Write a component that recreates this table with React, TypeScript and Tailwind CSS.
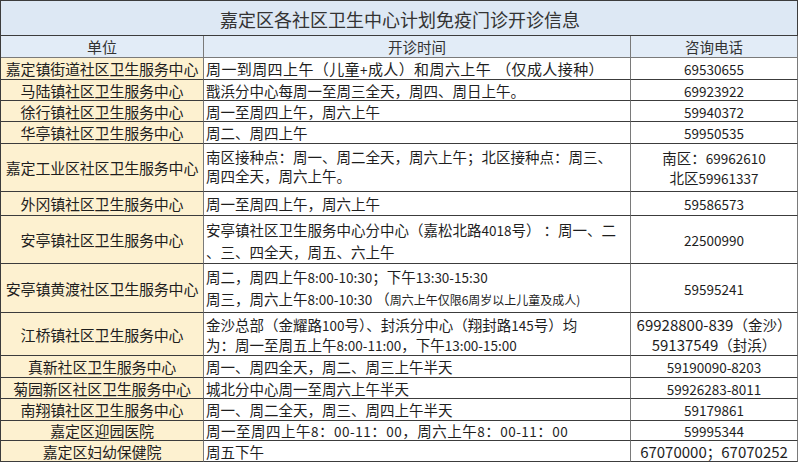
import React from "react";

const FONT = { fontFamily: '"Noto Sans CJK SC", "Noto Sans", sans-serif' };

function T({ s, big }: { s: string; big?: boolean }) {
  const parts = s.split(/([\x20-\x7e]+)/).filter((p) => p.length > 0);
  return (
    <>
      {parts.map((p, i) =>
        /^[\x20-\x7e]+$/.test(p) ? (
          <span key={i} className={big ? "text-[15px]" : "text-[13.5px]"}>
            {p}
          </span>
        ) : (
          <span key={i}>{p}</span>
        )
      )}
    </>
  );
}

type Row = { unit: string; time: React.ReactNode; phone: React.ReactNode };

const rows: Row[] = [
  {
    unit: "嘉定镇街道社区卫生服务中心",
    time: (
      <span className="text-[15px] tracking-[0.4px]">
        <T s="周一到周四上午（儿童+成人）和周六上午" />
        <span className="ml-[5px]">（仅成人接种）</span>
      </span>
    ),
    phone: <T s="69530655" />,
  },
  { unit: "马陆镇社区卫生服务中心", time: <T s="戬浜分中心每周一至周三全天，周四、周日上午。" />, phone: <T s="69923922" /> },
  { unit: "徐行镇社区卫生服务中心", time: <T s="周一至周四上午，周六上午" />, phone: <T s="59940372" /> },
  { unit: "华亭镇社区卫生服务中心", time: <T s="周二、周四上午" />, phone: <T s="59950535" /> },
  {
    unit: "嘉定工业区社区卫生服务中心",
    time: (
      <div className="leading-[19px] -mt-[5px]">
        <div><T s="南区接种点：周一、周二全天，周六上午；北区接种点：周三、" /></div>
        <div><T s="周四全天，周六上午。" /></div>
      </div>
    ),
    phone: (
      <div className="leading-[20px]">
        <div><T s="南区：69962610" /></div>
        <div><T s="北区59961337" /></div>
      </div>
    ),
  },
  { unit: "外冈镇社区卫生服务中心", time: <T s="周一至周四上午，周六上午" />, phone: <T s="59586573" /> },
  {
    unit: "安亭镇社区卫生服务中心",
    time: (
      <div className="leading-[21px]">
        <div><T s="安亭镇社区卫生服务中心分中心（嘉松北路4018号） ：周一、二" /></div>
        <div><T s="、三、四全天，周五、六上午" /></div>
      </div>
    ),
    phone: <T s="22500990" />,
  },
  {
    unit: "安亭镇黄渡社区卫生服务中心",
    time: (
      <div className="leading-[22px]">
        <div><T s="周二，周四上午8:00-10:30；下午13:30-15:30" /></div>
        <div>
          <T s="周三，周六上午8:00-10:30 " />
          <span>（</span>
          <span className="text-[12px]">周六上午仅限6周岁以上儿童及成人)</span>
        </div>
      </div>
    ),
    phone: <T s="59595241" />,
  },
  {
    unit: "江桥镇社区卫生服务中心",
    time: (
      <div className="leading-[20px]">
        <div><T s="金沙总部（金耀路100号）、封浜分中心（翔封路145号）均" /></div>
        <div><T s="为：周一至周五上午8:00-11:00，下午13:00-15:00" /></div>
      </div>
    ),
    phone: (
      <div className="leading-[20px]">
        <div><T s="69928800-839（金沙）" big /></div>
        <div><T s="59137549（封浜）" big /></div>
      </div>
    ),
  },
  { unit: "真新社区卫生服务中心", time: <T s="周一、周四全天，周二、周三上午半天" />, phone: <T s="59190090-8203" /> },
  { unit: "菊园新区社区卫生服务中心", time: <T s="城北分中心周一至周六上午半天" />, phone: <T s="59926283-8011" /> },
  { unit: "南翔镇社区卫生服务中心", time: <T s="周一、周二全天，周三、周四上午半天" />, phone: <T s="59179861" /> },
  {
    unit: "嘉定区迎园医院",
    time: (
      <span className="tracking-[0.5px]">
        <T s="周一至周四上午8：00-11：00，周六上午8：00-11：00" />
      </span>
    ),
    phone: <T s="59995344" />,
  },
  { unit: "嘉定区妇幼保健院", time: <T s="周五下午" />, phone: <T s="67070000；67070252" big /> },
];

export default function App() {
  return (
    <div className="w-[800px] h-[465px] bg-white overflow-hidden text-[#1e1e1e]" style={FONT}>
      <div className="w-[798px] border-l border-t border-[#3c3c3c] grid grid-cols-[203px_427px_167px] grid-rows-[35px_22px_22px_21px_21px_22px_48px_24px_48px_49px_43px_22px_21px_22px_20px_21px]">
        <div className="col-span-3 bg-[#dde8f4] border-r border-b border-[#3c3c3c] flex items-center justify-center text-[18px] leading-[24px] text-[#333] pl-[2px] pt-[1px]">
          嘉定区各社区卫生中心计划免疫门诊开诊信息
        </div>
        <div className="bg-[#e2ecf7] border-r border-b border-[#7a7a7a] flex items-center justify-center text-[15px] leading-[18px] text-[#333]">单位</div>
        <div className="bg-[#e2ecf7] border-r border-b border-[#7a7a7a] flex items-center justify-center text-[14.5px] leading-[18px] text-[#333]">开诊时间</div>
        <div className="bg-[#e2ecf7] border-r border-b border-[#7a7a7a] flex items-center justify-center text-[14.5px] leading-[18px] text-[#333]">咨询电话</div>
        {rows.map((r, i) => (
          <React.Fragment key={i}>
            <div className="bg-[#fdf1d0] border-r border-b border-r-[#7a7a7a] border-b-[#3c3c3c] flex items-center justify-center text-[15px] leading-[18px] whitespace-nowrap overflow-hidden tracking-[-0.2px] pt-[1px]">
              {r.unit}
            </div>
            <div className="bg-white border-r border-b border-r-[#7a7a7a] border-b-[#3c3c3c] flex items-center pl-[2px] pt-[1px] text-[14.5px] leading-[18px] whitespace-nowrap overflow-hidden">
              <div>{r.time}</div>
            </div>
            <div className="bg-white border-r border-b border-r-[#7a7a7a] border-b-[#3c3c3c] flex items-center justify-center text-center pt-[1px] text-[14.5px] leading-[18px] whitespace-nowrap overflow-hidden">
              <div>{r.phone}</div>
            </div>
          </React.Fragment>
        ))}
      </div>
    </div>
  );
}
